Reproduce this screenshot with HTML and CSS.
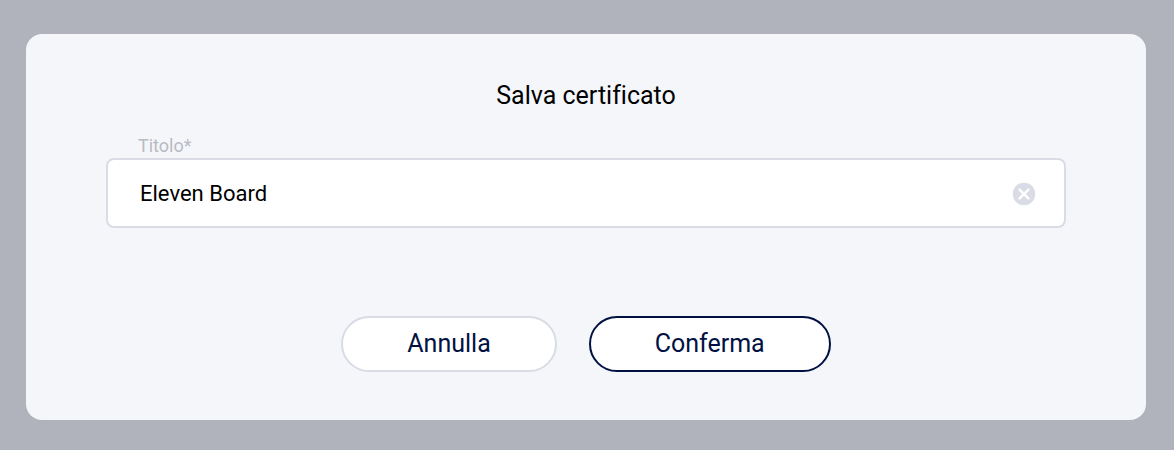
FILE: index.html
```
<!DOCTYPE html>
<html lang="it">
<head>
    <meta charset="UTF-8">
    <meta name="viewport" content="width=device-width, initial-scale=1.0">
    <title>Salva certificato</title>
    <link rel="stylesheet" href="styles.css">
</head>
<body>
    <form class="modal">
        <h1 class="title">Salva certificato</h1>
        <label class="label" for="titolo">Titolo*</label>
        <div class="field">
            <input class="input" type="text" id="titolo" value="Eleven Board">
            <button class="clear" type="button" aria-label="Cancella">
                <svg width="24" height="24" viewBox="0 0 24 24">
                    <circle cx="12" cy="12" r="11.2" fill="#d9dbe5"/>
                    <path d="M7.6 7.6l8.8 8.8M16.4 7.6l-8.8 8.8" fill="none" stroke="#fff" stroke-width="2.5" stroke-linecap="round"/>
                </svg>
            </button>
        </div>
        <div class="actions">
            <button class="btn" type="button">Annulla</button>
            <button class="btn btn-confirm" type="submit">Conferma</button>
        </div>
    </form>
</body>
</html>
```

FILE: styles.css
```
*{
    box-sizing: border-box;
}
body{
    margin: 0;
    padding: 34px 28px 30px 26px;
    background-color: #b0b2bc;
    font-family: Roboto, "Liberation Sans", sans-serif;
    font-variant-ligatures: none;
}
.modal{
    padding: 46px 80px 48px;
    background-color: #f4f6fa;
    border-radius: 16px;
}
.title{
    margin: 0;
    font-size: 25px;
    font-weight: 400;
    line-height: 32px;
    text-align: center;
    color: #000;
}
.label{
    display: block;
    margin-top: 22px;
    padding-left: 32px;
    font-size: 18px;
    line-height: 24px;
    color: #b9bbc3;
}
.field{
    display: flex;
    align-items: center;
    height: 70px;
    padding: 2px 28px 0 32px;
    background-color: #fff;
    border: 2px solid #d9dbe5;
    border-radius: 8px;
}
.input{
    flex: 1;
    min-width: 0;
    padding: 0;
    border: 0;
    outline: 0;
    background: none;
    font-family: inherit;
    font-size: 22px;
    line-height: 32px;
    color: #000;
}
.clear{
    display: flex;
    padding: 0;
    border: 0;
    background: none;
    cursor: pointer;
}
.actions{
    display: flex;
    justify-content: center;
    gap: 32px;
    margin-top: 88px;
}
.btn{
    height: 56px;
    padding: 0 64px;
    font-family: inherit;
    font-size: 25px;
    line-height: 32px;
    color: #001142;
    background-color: #fff;
    border: 2px solid #d9dbe5;
    border-radius: 28px;
    cursor: pointer;
}
.btn-confirm{
    border-color: #001142;
}
```
